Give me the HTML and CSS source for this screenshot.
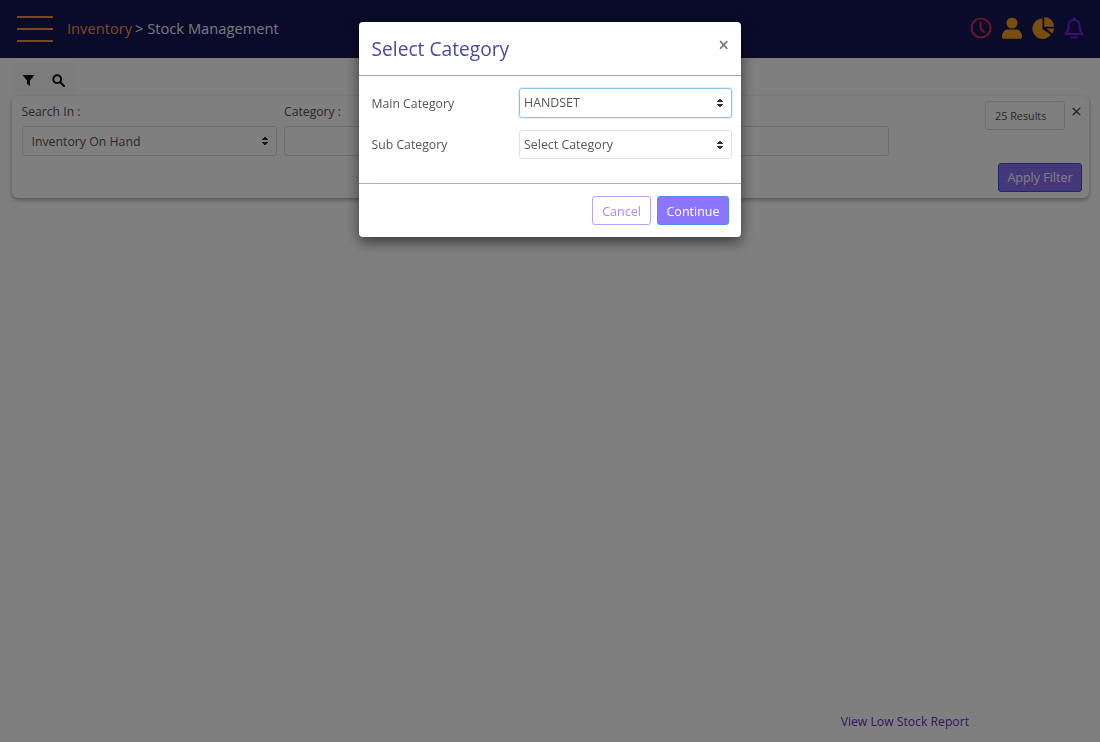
FILE: index.html
```html
<!DOCTYPE html>
<html lang="en">
<head>
<meta charset="utf-8">
<title>Stock Management</title>
<link rel="stylesheet" href="styles.css">
</head>
<body>
<div class="page">
  <header class="topbar">
    <button class="burger" aria-label="Menu"><span></span><span></span><span></span></button>
    <div class="crumbs"><span class="crumb-root">Inventory</span> <span class="crumb-sep">&gt;</span> Stock Management</div>
    <div class="top-icons">
      <svg class="ic" width="22" height="22" viewBox="0 0 22 22" fill="none" stroke="#d32f4a" stroke-width="2"><circle cx="11" cy="11" r="9.5"/><path d="M10.500 5.500V11.500L14 15" stroke-linecap="round"/></svg>
      <svg class="ic" width="20" height="22" viewBox="0 0 20 22" fill="#f39c1f"><circle cx="10" cy="6" r="5.500"/><path d="M0 20c0-5 3-7.500 6-7.500h8c3 0 6 2.500 6 7.500 0 1-.8 1.700-1.700 1.700H1.700C.8 21.700 0 21 0 20z"/></svg>
      <svg class="ic" width="22" height="22" viewBox="0 0 22 22" fill="#f39c1f"><path d="M10.500 1.500A10.200 10.200 0 1 0 18.800 17.800L10.500 12z"/><path d="M12.300 0A9.800 9.800 0 0 1 22 9.700H12.300z"/><path d="M14.500 11.500H22A10 10 0 0 1 20.300 16.500z"/></svg>
      <svg class="ic" width="20" height="23" viewBox="0 0 20 23" fill="none" stroke="#7a1fe0" stroke-width="2.200"><path d="M10 3c-3.500 0-5.500 2.700-5.500 6 0 4.500-1.200 6.300-3 8h17c-1.800-1.700-3-3.500-3-8 0-3.300-2-6-5.500-6z" stroke-linejoin="round"/><path d="M10 1v2" stroke-linecap="round"/><path d="M7.500 20.500h5" stroke-linecap="round"/></svg>
    </div>
  </header>

  <main class="content">
    <div class="tools">
      <svg width="13" height="13" viewBox="0 0 13 13" fill="#111"><path d="M.5 1h12L8 6.500V12L5 10V6.500z"/></svg>
      <svg width="13" height="13" viewBox="0 0 13 13" fill="none" stroke="#111" stroke-width="2"><circle cx="5.200" cy="5.200" r="3.900"/><path d="M8 8l4 4" stroke-linecap="round"/></svg>
    </div>
    <section class="filter-card">
      <div class="filter-fields">
        <div class="field">
          <label class="field-label">Search In :</label>
          <div class="select wide">Inventory On Hand<i class="updown"></i></div>
        </div>
        <div class="field grow">
          <label class="field-label">Category :</label>
          <div class="select blank"></div>
        </div>
      </div>
      <div class="filter-side">
        <div class="side-top">
          <div class="results">25 Results</div>
          <span class="dismiss">×</span>
        </div>
        <button class="apply">Apply Filter</button>
      </div>
    </section>
    <a class="low-stock">View Low Stock Report</a>
  </main>
</div>

<div class="backdrop"></div>
<div class="modal-wrap">
  <div class="modal">
    <div class="modal-head">
      <h2 class="modal-title">Select Category</h2>
      <span class="modal-close">×</span>
    </div>
    <div class="modal-body">
      <div class="modal-row">
        <label class="modal-label">Main Category</label>
        <div class="modal-select focus">HANDSET<i class="updown"></i></div>
      </div>
      <div class="modal-row">
        <label class="modal-label">Sub Category</label>
        <div class="modal-select">Select Category<i class="updown"></i></div>
      </div>
    </div>
    <div class="modal-foot">
      <button class="btn-cancel">Cancel</button>
      <button class="btn-continue">Continue</button>
    </div>
  </div>
</div>
</body>
</html>
```
FILE: styles.css
```css
* { box-sizing: border-box; }
html, body { margin: 0; height: 100%; overflow: hidden; }
body { font-family: "Open Sans", "Liberation Sans", sans-serif; font-size: 12px; color: #444; background: #fff; }

.page { height: 742px; display: flex; flex-direction: column; }

.topbar { height: 58px; background: #141454; display: flex; align-items: center; padding: 0 16px 2px 17px; flex: none; }
.burger { width: 36px; height: 26px; padding: 0; margin: 2px 14px 0 0; border: 0; background: none; display: flex; flex-direction: column; justify-content: space-between; }
.burger span { display: block; height: 2px; background: #f2933c; }
.crumbs { color: #f0f0f5; font-size: 14.700px; font-weight: 400; flex: 1; white-space: nowrap; }
.crumb-root { color: #f5913f; }
.crumb-sep { color: #f0f0f5; margin-left: -1px; }
.top-icons { display: flex; align-items: center; gap: 10px; }
.ic { display: block; flex: none; }

.content { flex: 1; display: flex; flex-direction: column; padding: 5px 11px 0 12px; }
.tools { width: 64px; height: 34px; background: #f9f9f9; border-radius: 4px 4px 0 0; display: flex; align-items: center; gap: 17px; padding: 0 10px; flex: none; margin-bottom: -1px; }
.filter-card { height: 102px; background: #fefefe; border-radius: 6px; box-shadow: 0 2px 4px rgba(0,0,0,.35); display: flex; padding: 7px 7px 6px 9.500px; flex: none; }
.filter-fields { display: flex; gap: 7px; flex: none; width: 867.500px; }
.field { display: flex; flex-direction: column; }
.field.grow { flex: 1; }
.field-label { font-size: 12.200px; line-height: 18px; color: #555; margin-bottom: 5px; }
.select { height: 30px; border: 1px solid #dcdcdc; border-radius: 3px; background: #fff; font-size: 12.300px; line-height: 29px; padding: 0 9px; color: #555; position: relative; }
.select.wide { width: 255.500px; }
.select.blank { width: 100%; }
.updown { position: absolute; right: 8px; top: 50%; width: 6px; height: 10px; margin-top: -5px; background:
  linear-gradient(to bottom right, transparent 50%, #333 51%) left top / 3px 4px no-repeat,
  linear-gradient(to bottom left, transparent 50%, #333 51%) right top / 3px 4px no-repeat,
  linear-gradient(to top right, transparent 50%, #333 51%) left bottom / 3px 4px no-repeat,
  linear-gradient(to top left, transparent 50%, #333 51%) right bottom / 3px 4px no-repeat; }

.filter-side { flex: 1; display: flex; flex-direction: column; align-items: flex-end; justify-content: space-between; }
.side-top { display: flex; align-items: flex-start; gap: 6px; margin-top: -2px; }
.results { width: 80px; height: 29px; border: 1px solid #dcdcdc; border-radius: 3px; font-size: 10.800px; line-height: 27px; padding-left: 9px; color: #555; }
.dismiss { width: 11px; font-size: 19px; line-height: 19px; margin-top: 1px; font-weight: 400; color: #444; text-align: center; }
.apply { width: 84px; height: 29px; border: 1px solid #2a5bd7; border-radius: 3px; background: #8c6ff7; color: #fff; font: inherit; font-size: 12.500px; padding: 0; }

.low-stock { margin: auto 120px 12px auto; color: #6f2dbd; font-size: 12.200px; line-height: 17px; }

.backdrop { position: fixed; inset: 0; background: rgba(0,0,0,.5); }
.modal-wrap { position: fixed; inset: 0; display: flex; justify-content: center; align-items: flex-start; padding-top: 22px; }
.modal { width: 382px; height: 215px; background: #fff; border-radius: 4px; box-shadow: 0 5px 14px rgba(0,0,0,.55); display: flex; flex-direction: column; }
.modal-head { height: 54px; flex: none; border-bottom: 1px solid #ae96dc; display: flex; justify-content: space-between; align-items: flex-start; padding: 0 12px 0 12.500px; }
.modal-title { margin: 14px 0 0; font-size: 19.200px; line-height: 26px; font-weight: 400; color: #4a4a9c; }
.modal-close { font-size: 19px; line-height: 20px; margin-top: 13px; font-weight: 600; color: #777; }
.modal-body { height: 108px; flex: none; border-bottom: 1px solid #b9a4ee; padding: 12px 9px 0 12.500px; }
.modal-row { display: flex; align-items: center; justify-content: space-between; margin-bottom: 12px; }
.modal-label { font-size: 12.250px; color: #555; }
.modal-select { width: 213px; height: 29px; border: 1px solid #e0e0e0; border-radius: 3px; font-size: 12.400px; line-height: 28px; padding: 0 4px; color: #555; position: relative; background: #fff; }
.modal-select.focus { height: 30px; border-color: #8cc4f0; box-shadow: 0 0 0 1px rgba(140,196,240,.25); }
.modal-foot { flex: 1; display: flex; justify-content: flex-end; gap: 6px; padding: 12px 12px 0 0; }
.btn-cancel, .btn-continue { height: 29px; border-radius: 3px; font: inherit; font-size: 12.500px; padding: 1px 0 0; }
.btn-cancel { width: 59px; background: #fff; border: 1px solid #b8a5fb; color: #a48cf8; }
.btn-continue { width: 72px; background: #8c75ff; border: 1px solid #4c8bf0; color: #fff; }
```
